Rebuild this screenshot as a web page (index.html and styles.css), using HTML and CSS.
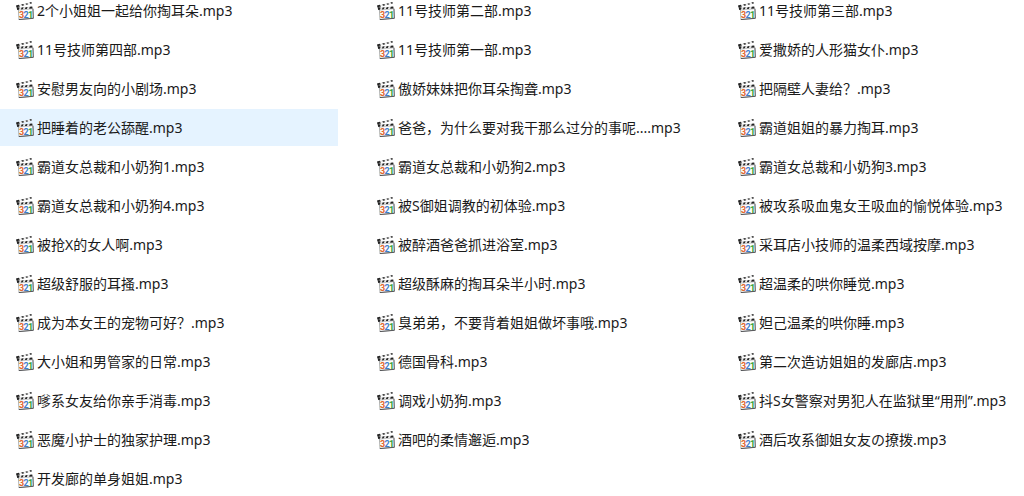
FILE: index.html
```html
<!DOCTYPE html>
<html lang="zh-CN">
<head>
    <meta charset="UTF-8">
    <meta name="viewport" content="width=device-width, initial-scale=1.0">
    <title>mp3</title>
    <link rel="stylesheet" href="styles.css">
</head>
<body>
    <svg class="symbols" aria-hidden="true">
        <symbol id="clapper" viewBox="0 0 18 18">
            <path d="M2.4 8 L16.8 6.6 L17.3 16.2 L3 17.5 Z" fill="#fdfdfd" stroke="#8a8c8f" stroke-width="0.7"/>
            <path d="M2.8 17.6 L17.4 16.3" stroke="#3c3e40" stroke-width="0.8"/>
            <path d="M17 6.8 L17.4 16.3" stroke="#55575a" stroke-width="0.8"/>
            <!-- hinged stick -->
            <path d="M0 3.4 L15.4 0 L15.8 1.8 L0.4 5.2 Z" fill="#eeeeee"/>
            <path d="M0 3.4 L2.8 2.8 L4 4.4 L0.4 5.2 Z M5.2 2.6 L7.2 2.1 L8.2 3.2 L6.2 3.7 Z M9.4 1.7 L11.2 1.3 L12.2 2.3 L10.4 2.7 Z M13.4 0.6 L15.4 0 L15.8 1.6 L14.4 1.8 Z" fill="#222222"/>
            <!-- fixed bar -->
            <path d="M0.6 5.6 L16.2 4.6 L16.6 6.8 L1.2 8 Z" fill="#e2e2e2"/>
            <path d="M0.6 5 L3.6 5.4 L3 7.8 L1.2 8 Z M5.6 5.5 L7.6 5.3 L6.8 7.2 L4.9 7.4 Z M9.6 5.2 L11.6 5 L10.8 6.9 L8.9 7.1 Z M13.8 4.8 L16.2 4.6 L16.6 6.6 L13.1 6.8 Z" fill="#222222"/>
            <text class="count" y="16"><tspan x="3" fill="#e2672c">3</tspan><tspan x="7.6" fill="#3f80cc">2</tspan><tspan x="12" fill="#35a032">1</tspan></text>
        </symbol>
    </svg>
    <main class="window">
        <ul class="files" id="files"></ul>
    </main>
    <script>
        const files = [
            "2个小姐姐一起给你掏耳朵.mp3", "11号技师第二部.mp3", "11号技师第三部.mp3",
            "11号技师第四部.mp3", "11号技师第一部.mp3", "爱撒娇的人形猫女仆.mp3",
            "安慰男友向的小剧场.mp3", "傲娇妹妹把你耳朵掏聋.mp3", "把隔壁人妻给？.mp3",
            "把睡着的老公舔醒.mp3", "爸爸，为什么要对我干那么过分的事呢....mp3", "霸道姐姐的暴力掏耳.mp3",
            "霸道女总裁和小奶狗1.mp3", "霸道女总裁和小奶狗2.mp3", "霸道女总裁和小奶狗3.mp3",
            "霸道女总裁和小奶狗4.mp3", "被S御姐调教的初体验.mp3", "被攻系吸血鬼女王吸血的愉悦体验.mp3",
            "被抢X的女人啊.mp3", "被醉酒爸爸抓进浴室.mp3", "采耳店小技师的温柔西域按摩.mp3",
            "超级舒服的耳搔.mp3", "超级酥麻的掏耳朵半小时.mp3", "超温柔的哄你睡觉.mp3",
            "成为本女王的宠物可好？.mp3", "臭弟弟，不要背着姐姐做坏事哦.mp3", "妲己温柔的哄你睡.mp3",
            "大小姐和男管家的日常.mp3", "德国骨科.mp3", "第二次造访姐姐的发廊店.mp3",
            "嗲系女友给你亲手消毒.mp3", "调戏小奶狗.mp3", "抖S女警察对男犯人在监狱里“用刑”.mp3",
            "恶魔小护士的独家护理.mp3", "酒吧的柔情邂逅.mp3", "酒后攻系御姐女友の撩拨.mp3",
            "开发廊的单身姐姐.mp3"
        ];
        const selected = 9;

        const list = document.getElementById("files");
        files.forEach((name, i) => {
            const item = document.createElement("li");
            item.innerHTML = '<a class="file" href="#"><svg class="icon" aria-hidden="true"><use href="#clapper"/></svg><span class="name"></span></a>';
            item.querySelector(".name").textContent = name;
            if (i === selected) {
                item.firstChild.classList.add("selected");
            }
            list.appendChild(item);
        });
    </script>
</body>
</html>
```
FILE: styles.css
```css
* {
    padding: 0;
    margin: 0;
    box-sizing: border-box;
}

body {
    background-color: #ffffff;
    color: #1a1a1a;
    font-family: "Noto Sans", "Noto Sans CJK SC", sans-serif;
    font-size: 14px;
}

.symbols {
    display: none;
}

.window {
    height: 100vh;
    overflow: hidden;
}

/* the list is scrolled a little, the last column runs past the right edge */
.files {
    list-style: none;
    display: grid;
    grid-template-columns: repeat(3, minmax(0, 1fr));
    gap: 2px 23px;
    margin: -8px -36px 0 0;
}

.file {
    display: flex;
    align-items: center;
    gap: 3px;
    height: 37px;
    padding-left: 16px;
    color: inherit;
    text-decoration: none;
    white-space: nowrap;
}

.selected {
    background-color: #e5f3ff;
}

.icon {
    width: 18px;
    height: 18px;
    flex-shrink: 0;
}

.name {
    line-height: 20px;
}

.count {
    font-family: Roboto, sans-serif;
    font-size: 9px;
    font-weight: 700;
}
```
